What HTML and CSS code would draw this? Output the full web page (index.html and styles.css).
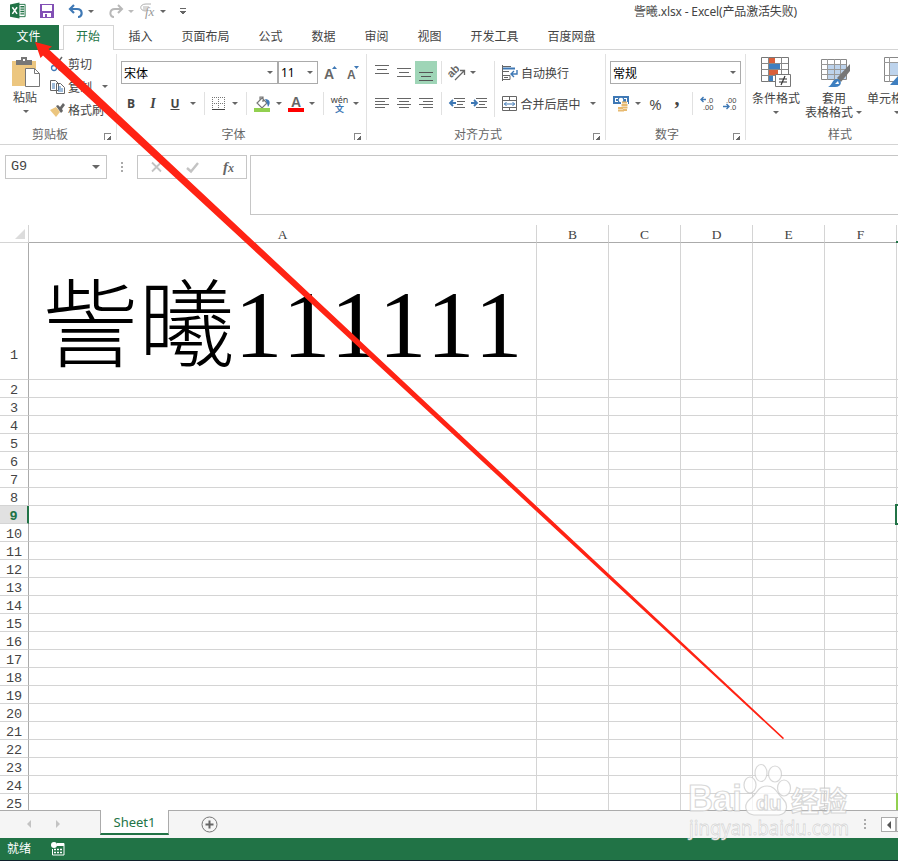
FILE: index.html
```html
<!DOCTYPE html>
<html lang="zh-CN">
<head>
    <meta charset="UTF-8">
    <title>訾曦.xlsx - Excel</title>
    <link rel="stylesheet" href="styles.css">
</head>
<body>
    <header class="titlebar">
        <div class="quick">
            <svg width="17" height="18" viewBox="0 0 18 18">
                <path d="M9 2h7v13H9z" fill="#fff" stroke="#217346"/>
                <path d="M11 4.500h4M11 7h4M11 9.500h4M11 12h4" stroke="#217346" stroke-width="1.500"/>
                <path d="M0 2l10-2v17L0 15z" fill="#217346"/>
                <path d="M2.500 5l5 7M7.500 5l-5 7" stroke="#fff" stroke-width="1.600"/>
            </svg>
            <svg width="14" height="14" viewBox="0 0 14 14">
                <path d="M0 0h14v14H0z" fill="#8250b5"/>
                <path d="M2 1h10v6H2zM3 9h8v4H7v-3H5v3H3z" fill="#fff"/>
            </svg>
            <svg width="16" height="14" viewBox="0 0 16 14">
                <path d="M6 1L2 5l4 4M2 5h7c6 0 6 8 1 8" fill="none" stroke="#3e78b5" stroke-width="2.200"/>
            </svg>
            <i class="caret"></i>
            <svg width="16" height="14" viewBox="0 0 16 14">
                <path d="M10 1l4 4-4 4M14 5H7C1 5 1 13 6 13" fill="none" stroke="#b8b8b8" stroke-width="2"/>
            </svg>
            <i class="caret light"></i>
            <svg width="17" height="16" viewBox="0 0 17 16">
                <path d="M6 8c-7 0-7-7 0-7h5M3 4h6M3 6h4" fill="none" stroke="#b0b0b0"/>
                <text x="5" y="13" class="fx-small">fx</text>
            </svg>
            <i class="caret"></i>
            <i class="customize"></i>
        </div>
        <div class="title">訾曦.xlsx - Excel(产品激活失败)</div>
    </header>

    <nav class="tabs">
        <span class="file-tab">文件</span>
        <span class="tab active">开始</span>
        <span class="tab">插入</span>
        <span class="tab">页面布局</span>
        <span class="tab">公式</span>
        <span class="tab">数据</span>
        <span class="tab">审阅</span>
        <span class="tab">视图</span>
        <span class="tab">开发工具</span>
        <span class="tab">百度网盘</span>
    </nav>

    <div class="ribbon">
        <section class="group clipboard">
            <div class="group-body">
                <div class="big-button paste">
                    <svg width="30" height="32" viewBox="0 0 30 32">
                        <path d="M1 4h24v25H1z" fill="#ecc67f"/>
                        <path d="M5 3h5V0h6v3h5v5H5z" fill="#777"/>
                        <path d="M12 2h2v2h-2z" fill="#fff"/>
                        <path d="M14.500 11.500h9l5 5v13h-14z" fill="#fff" stroke="#777"/>
                        <path d="M23.500 11.500v5h5" fill="none" stroke="#777"/>
                    </svg>
                    <span>粘贴</span>
                    <i class="caret"></i>
                </div>
                <div class="small-buttons">
                    <div>
                        <svg width="15" height="16" viewBox="0 0 15 16">
                            <path d="M2 1l8 9M12 1L5 10" stroke="#666" stroke-width="1.500"/>
                            <circle cx="4" cy="12" r="2.500" fill="none" stroke="#3e78b5" stroke-width="1.300"/>
                            <circle cx="11" cy="12" r="2.500" fill="none" stroke="#3e78b5" stroke-width="1.300"/>
                        </svg>
                        <span>剪切</span>
                    </div>
                    <div>
                        <svg width="15" height="16" viewBox="0 0 15 16">
                            <path d="M.5 1.500h5l3 3v7h-8zM6.500 4.500h4l4 4v6h-8z" fill="#fff" stroke="#666"/>
                            <path d="M2 5h3M2 7h3M2 9h3M8 8h3M8 10h5M8 12h5" stroke="#3e78b5"/>
                        </svg>
                        <span>复制</span>
                        <i class="caret"></i>
                    </div>
                    <div>
                        <svg width="15" height="16" viewBox="0 0 15 16">
                            <path d="M0 8l6-3 4 5-4 5z" fill="#ecc67f"/>
                            <path d="M6 4l2-1 2 2 3-4 2 2-3 4 1 2-2 2z" fill="#666"/>
                        </svg>
                        <span>格式刷</span>
                    </div>
                </div>
            </div>
            <div class="caption">剪贴板<i class="launcher"></i></div>
        </section>

        <section class="group font">
            <div class="row combos">
                <div class="combo font-name">宋体<i class="caret"></i></div>
                <div class="combo font-size">11<i class="caret"></i></div>
                <svg class="grow" width="14" height="16" viewBox="0 0 14 16">
                    <text x="0" y="14" class="letter" font-size="14">A</text>
                    <path d="M8 4l2.500-3L13 4z" fill="#3e78b5"/>
                </svg>
                <svg class="shrink" width="14" height="16" viewBox="0 0 14 16">
                    <text x="1" y="14" class="letter" font-size="12">A</text>
                    <path d="M8 1h5l-2.500 3z" fill="#3e78b5"/>
                </svg>
            </div>
            <div class="row tools">
                <b>B</b>
                <em>I</em>
                <u>U</u>
                <i class="caret"></i>
                <i class="sep"></i>
                <svg width="13" height="13" viewBox="0 0 13 13">
                    <path d="M.5 0v12M6.500 0v12M12.500 0v12M0 .5h13M0 6.500h13" stroke="#777" stroke-dasharray="1 1"/>
                    <path d="M0 12.500h13" stroke="#444"/>
                </svg>
                <i class="caret"></i>
                <i class="sep"></i>
                <svg width="17" height="16" viewBox="0 0 17 16">
                    <path d="M8 2l5 5-5 5-5-5zM6 5V1h3v5" fill="none" stroke="#777" stroke-width="1.200"/>
                    <path d="M11 3c5 0 6 4 3 8l-1-4z" fill="#3e78b5"/>
                    <path d="M0 12h16v4H0z" fill="#92d050"/>
                </svg>
                <i class="caret"></i>
                <svg width="16" height="16" viewBox="0 0 16 16">
                    <text x="3" y="11" class="letter" font-size="14">A</text>
                    <path d="M0 12h16v4H0z" fill="#f00"/>
                </svg>
                <i class="caret"></i>
                <i class="sep"></i>
                <span class="phonetic"><span>wén</span><span>文</span></span>
                <i class="caret"></i>
            </div>
            <div class="caption">字体<i class="launcher"></i></div>
        </section>

        <section class="group align">
            <div class="row vertical">
                <svg width="14" height="14" viewBox="0 0 14 14"><path d="M0 .5h14M2 4.500h10M0 8.500h14" transform="translate(0 -1)" stroke="#666"/></svg>
                <svg width="14" height="14" viewBox="0 0 14 14"><path d="M0 2.500h14M2 6.500h10M0 10.500h14" stroke="#666"/></svg>
                <span class="pressed"><svg width="14" height="14" viewBox="0 0 14 14"><path d="M0 6.500h14M2 10.500h10M0 14.500h14" stroke="#555"/></svg></span>
                <i class="sep"></i>
                <svg width="17" height="16" viewBox="0 0 17 16">
                    <text x="0" y="10" class="letter" font-size="11" transform="rotate(-45 5 9)">ab</text>
                    <path d="M6 15l9-9M11 5.500h4.500V10" fill="none" stroke="#666" stroke-width="1.300"/>
                </svg>
                <i class="caret"></i>
                <span></span>
                <i class="sep tall"></i>
                <svg width="16" height="16" viewBox="0 0 16 16">
                    <path d="M.5 0v16M0 1.500h9M0 6.500h7M0 10.500h8v4H0M2 12.500h4" fill="none" stroke="#666"/>
                    <path d="M1 3.500h12" stroke="#3e78b5" stroke-width="2"/>
                    <path d="M15 5v4H9M12 6L9 9l3 3" fill="none" stroke="#3e78b5" stroke-width="1.400"/>
                </svg>
                <span>自动换行</span>
            </div>
            <div class="row horizontal">
                <svg width="14" height="11" viewBox="0 0 14 11"><path d="M0 .5h14M0 3.500h10M0 6.500h14M0 9.500h10" stroke="#666"/></svg>
                <svg width="14" height="11" viewBox="0 0 14 11"><path d="M0 .5h14M2 3.500h10M0 6.500h14M2 9.500h10" stroke="#666"/></svg>
                <svg width="14" height="11" viewBox="0 0 14 11"><path d="M0 .5h14M4 3.500h10M0 6.500h14M4 9.500h10" stroke="#666"/></svg>
                <i class="sep"></i>
                <svg width="16" height="11" viewBox="0 0 16 11">
                    <path d="M5 .5h11M8 3.500h8M8 6.500h6M5 9.500h11" stroke="#666"/>
                    <path d="M7 5H1M4 2L1 5l3 3" fill="none" stroke="#3e78b5" stroke-width="1.800"/>
                </svg>
                <svg width="16" height="11" viewBox="0 0 16 11">
                    <path d="M5 .5h11M8 3.500h8M8 6.500h6M5 9.500h11" stroke="#666"/>
                    <path d="M0 5h6M3 2l3 3-3 3" fill="none" stroke="#3e78b5" stroke-width="1.800"/>
                </svg>
                <span></span>
                <svg width="16" height="16" viewBox="0 0 16 16">
                    <path d="M.5.500h14v14H.5zM0 4.500h15M0 11.500h15M7.500 0v4M7.500 11v4" fill="none" stroke="#666"/>
                    <path d="M2 8h11M4.500 6l-2 2 2 2M10.500 6l2 2-2 2" fill="none" stroke="#3e78b5"/>
                </svg>
                <span>合并后居中</span>
                <i class="caret"></i>
            </div>
            <div class="caption">对齐方式<i class="launcher"></i></div>
        </section>

        <section class="group number">
            <div class="row combos">
                <div class="combo format">常规<i class="caret"></i></div>
            </div>
            <div class="row tools">
                <svg width="17" height="16" viewBox="0 0 17 16">
                    <path d="M0 0h16v8H0z" fill="#3e78b5"/>
                    <path d="M2 2h3v1H3v2h2v1H2zM11 2h3v4h-1V3h-2z" fill="#fff"/>
                    <circle cx="8" cy="4" r="2.300" fill="#fff"/>
                    <path d="M8 6h7v9H8zM4 11h7v5H4z" fill="#fff"/>
                    <path d="M9 6.500h5M8.500 9h6M8.500 11.500h6M5 12h5M5 14.500h6M10 14h4" stroke="#e8ba70" stroke-width="1.800"/>
                </svg>
                <i class="caret"></i>
                <span class="percent">%</span>
                <span class="comma">,</span>
                <i class="sep"></i>
                <svg width="15" height="15" viewBox="0 0 15 15">
                    <path d="M6 3.500H1M3.500 1L1 3.500 3.500 6" fill="none" stroke="#3e78b5" stroke-width="1.400"/>
                    <text x="7" y="6.500" class="decimal">.0</text>
                    <text x="3" y="14" class="decimal">.00</text>
                </svg>
                <svg width="15" height="15" viewBox="0 0 15 15">
                    <text x="3" y="6.500" class="decimal">.00</text>
                    <path d="M0 10.500h6M3.500 8L6 10.500 3.500 13" fill="none" stroke="#3e78b5" stroke-width="1.400"/>
                    <text x="7" y="14" class="decimal">.0</text>
                </svg>
            </div>
            <div class="caption">数字<i class="launcher"></i></div>
        </section>

        <section class="group styles">
            <div class="group-body">
                <div class="big-button">
                    <svg width="30" height="31" viewBox="0 0 30 31">
                        <path d="M.5.500h27v24H.5z" fill="#fff" stroke="#777"/>
                        <path d="M8 1h6v5H8zM8 13h9v5H8z" fill="#d9603b"/>
                        <path d="M8 7h11v5H8zM8 19h4v5H8z" fill="#3e7fc0"/>
                        <path d="M7.500 0v25M20.500 0v18M0 6.500h27M0 12.500h27M0 18.500h14" stroke="#888" fill="none"/>
                        <path d="M14.500 17.500h15v12h-15z" fill="#fff" stroke="#777"/>
                        <path d="M18 22h8M18 25h8M24 19l-4 9" stroke="#333" stroke-width="1.200"/>
                    </svg>
                    <span>条件格式</span>
                    <i class="caret"></i>
                </div>
                <div class="big-button table-format">
                    <svg width="30" height="31" viewBox="0 0 30 31">
                        <path d="M.5 2.500h25v20H.5z" fill="#fff" stroke="#888"/>
                        <path d="M7 8h18v14H7z" fill="#bdd3ec"/>
                        <path d="M6.500 2v21M13.500 2v21M19.500 2v21M0 7.500h25M0 12.500h25M0 17.500h25" stroke="#999"/>
                        <path d="M29 7v7l-9 11-4-4z" fill="#777"/>
                        <path d="M7 30c4-1 4-8 9-8s6 8-2 8z" fill="#3e7fc0"/>
                        <path d="M14 27l3-3 1 3z" fill="#fff"/>
                    </svg>
                    <span>套用</span>
                    <span class="second">表格格式<i class="caret"></i></span>
                </div>
                <div class="big-button">
                    <svg width="30" height="31" viewBox="0 0 30 31">
                        <path d="M2.500.500h26v24h-26z" fill="#fff" stroke="#888"/>
                        <path d="M8 6h18v13H8z" fill="#bdd3ec"/>
                        <path d="M7.500 0v25M2 5.500h26M2 18.500h26" stroke="#999"/>
                        <path d="M8 28l9-10v10z" fill="#3e7fc0"/>
                    </svg>
                    <span>单元格样式</span>
                    <i class="caret"></i>
                </div>
            </div>
            <div class="caption">样式</div>
        </section>
    </div>

    <div class="formula-bar">
        <div class="name-box">G9<i class="caret wide"></i></div>
        <i class="dots"></i>
        <div class="formula-buttons">
            <svg width="11" height="10" viewBox="0 0 11 10"><path d="M1 .5l9 9M10 .5l-9 9" stroke="#c3c3c3" stroke-width="1.800"/></svg>
            <svg width="13" height="11" viewBox="0 0 13 11"><path d="M1 6l4 3.500L12 1" fill="none" stroke="#c3c3c3" stroke-width="2.400"/></svg>
            <span class="fx">f<small>x</small></span>
        </div>
        <div class="formula-input"></div>
    </div>

    <main class="sheet">
        <table>
            <colgroup>
                <col class="col-head"><col class="col-a"><col><col><col><col><col><col class="col-g">
            </colgroup>
            <thead>
                <tr><th><i class="select-all"></i></th><th>A</th><th>B</th><th>C</th><th>D</th><th>E</th><th>F</th><th></th></tr>
            </thead>
            <tbody id="rows">
                <tr class="first"><th>1</th><td><div><span>訾曦</span>111111</div></td><td></td><td></td><td></td><td></td><td></td><td></td></tr>
            </tbody>
        </table>
        <i class="cursor-top"></i>
        <i class="cursor"></i>
        <i class="shape"></i>
    </main>

    <div class="sheet-tabs">
        <i class="nav prev"></i>
        <i class="nav next"></i>
        <span class="sheet-tab">Sheet1</span>
        <svg width="17" height="17" viewBox="0 0 17 17">
            <circle cx="8.500" cy="8.500" r="7.500" fill="none" stroke="#777"/>
            <path d="M8.500 4.500v8M4.500 8.500h8" stroke="#666" stroke-width="2"/>
        </svg>
        <i class="dots"></i>
        <span class="scroll-button"><i></i></span>
        <span class="scroll-thumb"></span>
    </div>

    <footer class="status">
        <span>就绪</span>
        <svg width="14" height="14" viewBox="0 0 14 14">
            <path d="M7 1.500h6v11.500H1.500V7" fill="none" stroke="#fff"/>
            <path d="M6 1h7v3H6z" fill="#fff"/>
            <path d="M3 7.500h9M3 10.500h9" stroke="#fff" stroke-width="1.500" stroke-dasharray="2 1"/>
            <circle cx="3" cy="3" r="3" fill="#fff"/>
        </svg>
    </footer>

    <svg class="watermark" width="170" height="84" viewBox="0 0 170 84">
        <g class="mark">
            <text x="3" y="55" class="brand" textLength="54" lengthAdjust="spacingAndGlyphs">Bai</text>
            <ellipse cx="65" cy="29" rx="6" ry="8"/>
            <ellipse cx="76" cy="17" rx="6" ry="8.500"/>
            <ellipse cx="90" cy="18" rx="6.500" ry="8"/>
            <ellipse cx="99" cy="32" rx="6.500" ry="8"/>
            <path d="M82 30c9 0 10 8 16 13 6 6 4 15-4 16H69c-9-1-11-10-4-16 7-5 8-13 17-13z"/>
            <text x="71" y="54" class="du">du</text>
            <text x="106" y="56" class="cn">经验</text>
            <text x="4" y="79" class="url" textLength="160" lengthAdjust="spacingAndGlyphs">jingyan.baidu.com</text>
        </g>
    </svg>

    <svg class="arrow" width="898" height="861" viewBox="0 0 898 861">
        <path d="M35 42l17 4.500-3.500 2.500L784 738l-1 1.200L43 55.500 40.500 58z" fill="#ff2314"/>
    </svg>

    <script>
        const rows = document.getElementById('rows');
        for (let n = 2; n <= 25; n++) {
            const tr = document.createElement('tr');
            if (n === 9) tr.className = 'current';
            tr.innerHTML = `<th>${n}</th>` + '<td></td>'.repeat(7);
            rows.appendChild(tr);
        }
    </script>
</body>
</html>
```
FILE: styles.css
```css
:root {
    --green: #217346;
    --text: #444;
    --blue: #3e78b5;
    --line: #d4d4d4;
}

* {
    box-sizing: border-box;
    margin: 0;
    padding: 0;
}

body {
    position: relative;
    display: flex;
    flex-direction: column;
    width: 898px;
    height: 861px;
    overflow: hidden;
    background: #fff;
    color: var(--text);
    font-family: "Noto Sans CJK SC", sans-serif;
    font-size: 12px;
    line-height: 16px;
}

svg {
    display: block;
    flex: none;
    overflow: visible;
}

i {
    display: block;
    flex: none;
}

.caret {
    width: 0;
    height: 0;
    border: 3px solid transparent;
    border-top: 3px solid #666;
    border-bottom: 0;
}

.caret.light {
    border-top-color: #bbb;
}

.caret.wide {
    border-width: 4px 4px 0;
}

/* title bar */
.titlebar {
    display: flex;
    flex: none;
    height: 25px;
}

.quick {
    display: grid;
    grid-template-columns: 30px 28px 20px 20px 20px 12px 20px 20px 10px;
    align-items: center;
    justify-items: start;
    width: 634px;
    height: 22px;
    padding-left: 10px;
}

.title {
    height: 22px;
    font-family: "Noto Sans", "Noto Sans CJK SC", sans-serif;
    line-height: 23px;
    white-space: nowrap;
    letter-spacing: -0.15px;
}

.fx-small {
    font: italic 13px "Liberation Serif", serif;
    fill: #999;
}

.customize {
    width: 6px;
    height: 6px;
    border-top: 1px solid #666;
    background: linear-gradient(#666, #666) 0 2px / 6px 1px no-repeat,
        linear-gradient(#666, #666) 1px 3px / 4px 1px no-repeat,
        linear-gradient(#666, #666) 2px 4px / 2px 1px no-repeat;
}

/* ribbon tabs */
.tabs {
    display: flex;
    flex: none;
    height: 25px;
    line-height: 22px;
    background: linear-gradient(var(--line), var(--line)) 0 24px / 100% 1px no-repeat;
}

.file-tab {
    width: 59px;
    margin-right: 4px;
    padding-right: 2px;
    background: var(--green);
    color: #fff;
    text-align: center;
}

.tab {
    padding: 0 14.5px;
}

.tab.active {
    width: 51px;
    padding: 0 0 0 12px;
    border: 1px solid var(--line);
    border-bottom: 0;
    background: #fff;
    color: var(--green);
    line-height: 20px;
}

/* ribbon */
.ribbon {
    display: flex;
    flex: none;
    height: 95px;
    padding-top: 4px;
    border-bottom: 1px solid var(--line);
    overflow: hidden;
}

.group {
    position: relative;
    flex: none;
    height: 86px;
    border-right: 1px solid #e1e1e1;
}

.clipboard { width: 117px; }
.font { width: 250px; padding-left: 3px; }
.align { width: 239px; padding-left: 4px; }
.number { width: 140px; padding-left: 4px; }
.styles { width: 190px; border: 0; }

.group-body {
    display: flex;
    height: 72px;
}

.caption {
    display: flex;
    justify-content: center;
    height: 16px;
    padding-right: 16px;
    color: #666;
}

.font .caption { padding-right: 19px; }
.align .caption { padding-right: 20px; }
.number .caption { padding-right: 21px; }
.styles .caption { padding-right: 2px; }

.launcher {
    position: absolute;
    right: 5px;
    bottom: 0;
    width: 7px;
    height: 7px;
    border-top: 1px solid #888;
    border-left: 1px solid #888;
    background: linear-gradient(135deg, transparent 50%, #666 50%) 2px 2px / 4px 4px no-repeat;
}

.row {
    display: grid;
    grid-template-rows: 23px;
    align-items: center;
    justify-items: center;
    height: 23px;
    margin-top: 7px;
}

.row + .row {
    margin-top: 8px;
}

.row + .caption {
    margin-top: 11px;
}

.combos {
    display: flex;
}

.combo {
    display: flex;
    align-items: center;
    justify-content: space-between;
    height: 23px;
    padding: 0 4px 0 2px;
    border: 1px solid #ababab;
    color: #000;
}

.font-name { width: 157px; margin-left: 1px; }
.font-size { width: 40px; }
.format { width: 131px; }

.font-size {
    font-family: "Noto Sans", sans-serif;
}

.grow { margin-left: 6px; }
.shrink { margin-left: 8px; }

.letter {
    font-family: "Liberation Sans", sans-serif;
    font-weight: bold;
    fill: #666;
}

.font .tools {
    grid-template-columns: 22px 22px 22px 13px 10px 19px 14px 9px 22px 11px 23px 10px 12px 21px 11px;
}

.tools b,
.tools em,
.tools u {
    font-family: "Open Sans", sans-serif;
    font-size: 12px;
    font-weight: bold;
}

.tools em {
    font-family: "Liberation Serif", serif;
    font-size: 14px;
}

.sep {
    width: 1px;
    height: 23px;
    background: #e1e1e1;
}

.sep.tall {
    align-self: start;
    height: 56px;
}

.phonetic {
    display: flex;
    flex-direction: column;
    align-items: center;
    font-family: "Noto Sans", "Noto Sans CJK SC", sans-serif;
    font-size: 9px;
    line-height: 9px;
}

.phonetic span + span {
    color: var(--blue);
    font-weight: bold;
}

.vertical {
    grid-template-columns: 22px 22px 22px 9px 22px 9px 13px 9px 21px 50px;
}

.horizontal {
    grid-template-columns: 22px 22px 22px 9px 22px 22px 9px 21px 61px 24px;
}

.pressed {
    display: flex;
    align-items: center;
    justify-content: center;
    width: 22px;
    height: 23px;
    background: #9fd5b7;
}

.number .tools {
    grid-template-columns: 22px 11px 25px 18px 12px 19px 26px;
}

.percent {
    font: 15px "Open Sans", sans-serif;
}

.comma {
    font: bold 20px/10px "Liberation Serif", serif;
    margin-top: -11px;
}

.decimal {
    font: 7.5px "Liberation Sans", sans-serif;
    fill: #444;
}

.big-button {
    display: flex;
    flex-direction: column;
    align-items: center;
    flex: none;
    width: 60px;
    padding-top: 3px;
    line-height: 15px;
    white-space: nowrap;
}

.big-button > span {
    margin-top: 2px;
}

.big-button > .caret {
    margin-top: 6px;
}

.big-button > .second {
    position: relative;
    margin-top: -1px;
    margin-right: 10px;
}

.table-format svg {
    margin-left: 3px;
}

.second .caret {
    position: absolute;
    right: -9px;
    top: 7px;
}

.styles .big-button + .big-button {
    width: 56px;
}

.styles .big-button:last-child {
    margin-left: 7px;
}

.big-button.paste {
    width: 50px;
    padding-left: 2px;
}

.paste span {
    margin-top: 0;
    margin-right: 2px;
}

.small-buttons {
    margin-top: -2px;
}

.small-buttons > div {
    display: flex;
    align-items: center;
    height: 23px;
    white-space: nowrap;
}

.small-buttons span {
    margin-left: 3px;
}

.small-buttons .caret {
    margin-left: 10px;
}

/* formula bar */
.formula-bar {
    display: flex;
    flex: none;
    align-items: flex-start;
    height: 80px;
    padding: 10px 0 0 5px;
}

.name-box {
    display: flex;
    align-items: center;
    justify-content: space-between;
    width: 102px;
    height: 24px;
    padding: 0 6px 0 5px;
    border: 1px solid #c6c6c6;
    font: 13.5px/24px "Liberation Mono", monospace;
}

.dots {
    width: 2px;
    height: 10px;
    background: repeating-linear-gradient(#aaa 0 2px, transparent 2px 4px);
}

.formula-bar .dots {
    margin: 7px 14px 0;
}

.formula-buttons {
    display: grid;
    grid-template-columns: 36px 37px 35px;
    align-items: center;
    justify-items: center;
    width: 110px;
    height: 24px;
    border: 1px solid #c6c6c6;
}

.fx {
    font: italic bold 15px "Liberation Serif", serif;
    color: #666;
}

.fx small {
    font-size: 12px;
}

.formula-input {
    flex: 1;
    height: 60px;
    margin-left: 3px;
    border: 1px solid #c6c6c6;
    border-right: 0;
}

/* grid */
.sheet {
    position: relative;
    flex: none;
    height: 585px;
    overflow: hidden;
}

table {
    width: 969px;
    table-layout: fixed;
    border-collapse: separate;
    border-spacing: 0;
}

col { width: 72px; }
.col-head { width: 29px; }
.col-a { width: 508px; }

th {
    height: 18px;
    border-right: 1px solid #ababab;
    border-bottom: 1px solid var(--line);
    font: 13.5px/13px "Liberation Mono", monospace;
    vertical-align: bottom;
}

thead th {
    border-right-color: var(--line);
    border-bottom-color: #ababab;
    font: 13.5px/14px "Liberation Serif", serif;
}

thead th:first-child {
    border-bottom-color: var(--line);
}

.select-all {
    width: 0;
    height: 0;
    margin: 0 0 3px 15px;
    border-left: 10px solid transparent;
    border-bottom: 10px solid #dcdcdc;
}

td {
    border-right: 1px solid var(--line);
    border-bottom: 1px solid var(--line);
}

.first th {
    height: 137px;
    padding-bottom: 17px;
}

.first div {
    height: 136px;
    line-height: 164px;
    color: #000;
    font-family: "Liberation Serif", "Noto Sans CJK SC", serif;
    font-size: 96px;
    font-weight: 300;
    font-kerning: none;
    text-align: center;
    white-space: nowrap;
}

.first span {
    position: relative;
    top: 2px;
}

.current th {
    background: #e1e1e1;
    border-right: 2px solid var(--green);
    color: var(--green);
    font-weight: bold;
}

.cursor-top {
    position: absolute;
    left: 896px;
    top: 16px;
    width: 2px;
    height: 2px;
    background: var(--green);
}

.cursor {
    position: absolute;
    left: 895px;
    top: 279px;
    width: 80px;
    height: 21px;
    border: 2px solid var(--green);
}

.shape {
    position: absolute;
    left: 896px;
    top: 568px;
    width: 2px;
    height: 17px;
    background: #92d050;
}

/* sheet tabs */
.sheet-tabs {
    display: flex;
    flex: none;
    height: 28px;
    border-top: 1px solid #ababab;
    background: #f5f5f5;
}

.nav {
    width: 0;
    height: 0;
    margin-top: 9px;
    border: 4px solid transparent;
}

.nav.prev {
    margin-left: 23px;
    border-right-color: #c3c3c3;
}

.nav.next {
    margin-left: 25px;
    border-left-color: #c3c3c3;
}

.sheet-tab {
    width: 69px;
    height: 25px;
    margin: -1px 32px 0 36px;
    border: 1px solid #ababab;
    border-top: 0;
    border-bottom: 2px solid var(--green);
    background: #fff;
    color: var(--green);
    font: 13px/24px "Noto Sans", sans-serif;
    text-align: center;
}

.sheet-tabs svg {
    margin-top: 5px;
}

.sheet-tabs .dots {
    margin: 8px 15px 0 auto;
}

.scroll-button {
    display: flex;
    align-items: center;
    justify-content: center;
    width: 15px;
    height: 15px;
    margin-top: 6px;
    border: 1px solid #ababab;
    background: #fff;
}

.scroll-button i {
    border: 4px solid transparent;
    border-left: 0;
    border-right-color: #555;
}

.scroll-thumb {
    width: 2px;
    height: 15px;
    margin-top: 6px;
    border: 1px solid #ababab;
    border-right: 0;
}

/* status bar */
.status {
    display: flex;
    flex: none;
    gap: 20px;
    height: 23px;
    padding: 2px 7px;
    border-bottom: 1px solid #10202b;
    background: var(--green);
    color: #fff;
}

.status svg {
    margin-top: 2px;
}

/* overlays */
.watermark {
    position: absolute;
    left: 685px;
    top: 756px;
}

.mark {
    fill: rgba(255, 255, 255, 0.75);
    stroke: rgba(190, 190, 190, 0.6);
    stroke-width: 1.2;
}

.brand { font: bold 36px "Liberation Sans", sans-serif; }
.du { font: bold 21px "Liberation Sans", sans-serif; }
.cn { font: bold 28px "Noto Sans CJK SC", sans-serif; }

.url {
    font: 19px "Noto Sans", sans-serif;
    fill: #fff;
    stroke-width: 0.8;
}

.arrow {
    position: absolute;
    left: 0;
    top: 0;
}
```
